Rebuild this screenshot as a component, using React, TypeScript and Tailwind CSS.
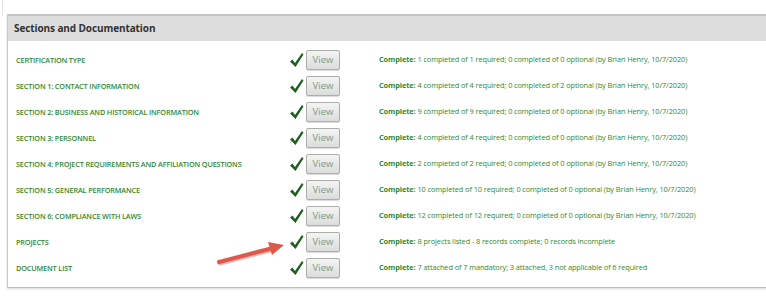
import React from 'react';

const rows = [
  { label: 'Certification Type', status: '1 completed of 1 required; 0 completed of 0 optional (by Brian Henry, 10/7/2020)' },
  { label: 'Section 1: Contact Information', status: '4 completed of 4 required; 0 completed of 2 optional (by Brian Henry, 10/7/2020)' },
  { label: 'Section 2: Business and Historical Information', status: '9 completed of 9 required; 0 completed of 0 optional (by Brian Henry, 10/7/2020)' },
  { label: 'Section 3: Personnel', status: '4 completed of 4 required; 0 completed of 0 optional (by Brian Henry, 10/7/2020)' },
  { label: 'Section 4: Project Requirements and Affiliation Questions', status: '2 completed of 2 required; 0 completed of 0 optional (by Brian Henry, 10/7/2020)' },
  { label: 'Section 5: General Performance', status: '10 completed of 10 required; 0 completed of 0 optional (by Brian Henry, 10/7/2020)' },
  { label: 'Section 6: Compliance with Laws', status: '12 completed of 12 required; 0 completed of 0 optional (by Brian Henry, 10/7/2020)' },
  { label: 'Projects', status: '8 projects listed - 8 records complete; 0 records incomplete' },
  { label: 'Document List', status: '7 attached of 7 mandatory; 3 attached, 3 not applicable of 6 required' },
];

const Check = () => (
  <svg width="15" height="16" viewBox="0 0 15 16" className="shrink-0">
    <path d="M1 9.5 L3.5 7.5 L6 11 L13 1 L14.5 2.5 L6.5 15 Z" fill="#1f5f1f" />
  </svg>
);

export default function App() {
  return (
    <div className="relative w-[766px] h-[301px] overflow-hidden bg-white font-['Open_Sans',sans-serif]">
      <div className="absolute left-[2px] top-0 h-[16px] w-px bg-[#e4e4e4]" />
      <div className="ml-[7px] mt-[14px] w-[790px] border-l border-b border-t-2 border-l-[#c8c8c8] border-b-[#bdbdbd] border-t-[#c4c4c4] shadow-[0_1px_2px_rgba(0,0,0,0.15)]">
        <div className="h-[25px] bg-[#dddddd] pl-[6px] flex items-center">
          <span className="text-[10px] font-bold text-[#333] tracking-[-0.1px]">Sections and Documentation</span>
        </div>
        <div className="pt-[6px] pb-[6px]">
          {rows.map((r) => (
            <div key={r.label} className="h-[26px] flex items-center">
              <div className="w-[281px] pl-[8px] text-[7.3px] font-semibold uppercase text-[#2f8a2f] tracking-[-0.15px]">
                {r.label}
              </div>
              <Check />
              <button className="ml-[2px] w-[34px] h-[20px] rounded-[2px] border border-[#a8b0a8] bg-gradient-to-b from-[#f4f4f4] to-[#dcdcdc] text-[9.5px] text-[#7f9a82] shadow-[0_1px_1px_rgba(0,0,0,0.15)]">
                View
              </button>
              <div className="ml-[39px] text-[7.4px] text-[#2f8a2f] tracking-[-0.1px] whitespace-nowrap">
                <span className="font-bold">Complete:</span> {r.status}
              </div>
            </div>
          ))}
        </div>
      </div>
      <svg className="absolute left-[216px] top-[240px]" width="72" height="28" viewBox="0 0 72 28">
        <line x1="4" y1="23" x2="58" y2="9" stroke="#b03a32" strokeWidth="5" strokeLinecap="round" opacity="0.35" />
        <line x1="3" y1="22" x2="57" y2="8" stroke="#e0584c" strokeWidth="4" strokeLinecap="round" />
        <path d="M52 2 L68 5 L56 15 Z" fill="#e0584c" />
      </svg>
    </div>
  );
}
